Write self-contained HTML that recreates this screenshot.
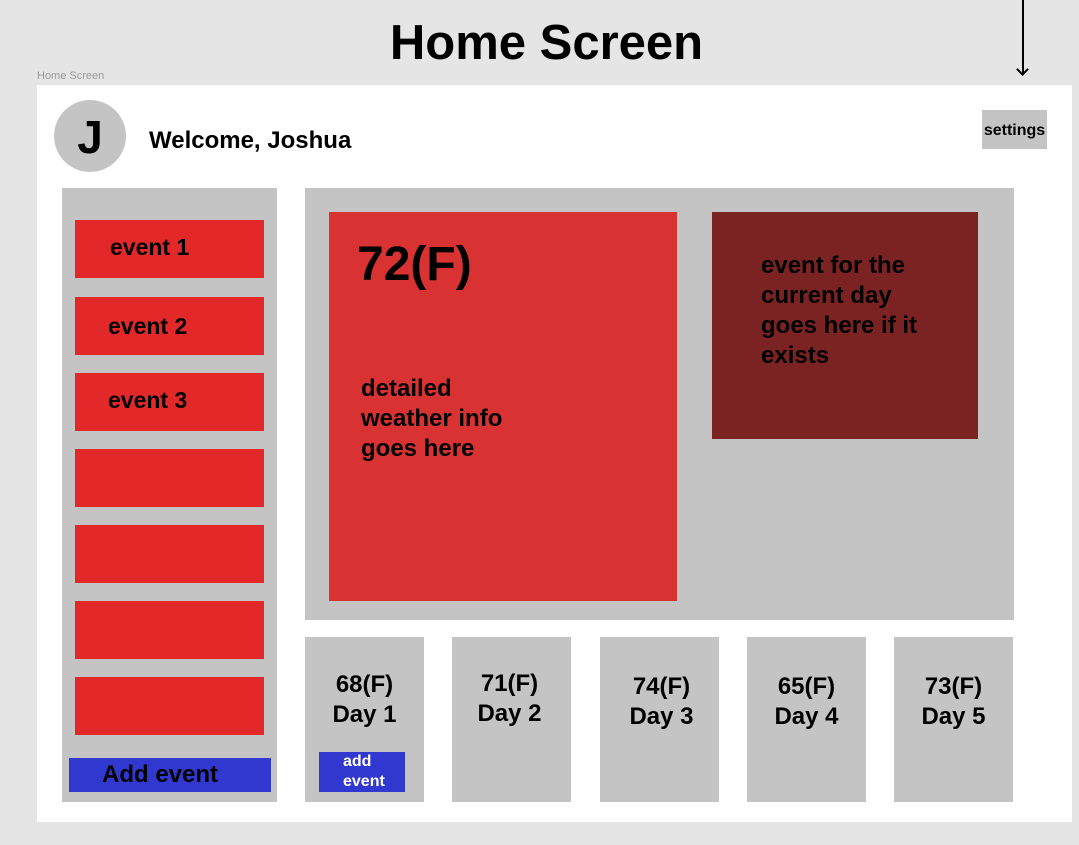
<!DOCTYPE html>
<html><head><style>
body{margin:0;width:1079px;height:845px;background:#e5e5e5;position:relative;overflow:hidden;font-family:"Liberation Sans",sans-serif;font-weight:bold;color:#000}
div,span{position:absolute;box-sizing:border-box}
.g{background:#c4c4c4}
.ev{left:75px;width:189px;height:58px;background:#e22828}
.evt{font-size:23px}
.day{top:637px;width:119px;height:165px;background:#c4c4c4;text-align:center;font-size:24px;line-height:30px}
</style></head><body>
<div style="left:0;width:1079px;top:15px;text-align:center;font-size:49px;padding-left:14px">Home Screen</div>
<div style="left:37px;top:70px;font-size:11px;font-weight:normal;color:#999">Home Screen</div>
<div style="left:1022px;top:0;width:2px;height:75px;background:#000"></div>
<div style="top:65px;width:9px;height:9px;border-right:2px solid #000;border-bottom:2px solid #000;transform:rotate(45deg);left:1018px"></div>
<div style="left:37px;top:85px;width:1035px;height:737px;background:#fff"></div>
<div style="left:54px;top:100px;width:72px;height:72px;border-radius:50%;background:#c4c4c4;text-align:center;font-size:46px;line-height:74px">J</div>
<div style="left:149px;top:127px;font-size:24px">Welcome, Joshua</div>
<div class="g" style="left:982px;top:110px;width:65px;height:39px;font-size:16px;text-align:center;line-height:42px">settings</div>
<div class="g" style="left:62px;top:188px;width:215px;height:614px"></div>
<div class="ev" style="top:220px"><span class="evt" style="left:35px;top:14px">event 1</span></div>
<div class="ev" style="top:297px"><span class="evt" style="left:33px;top:16px">event 2</span></div>
<div class="ev" style="top:373px"><span class="evt" style="left:33px;top:14px">event 3</span></div>
<div class="ev" style="top:449px"></div>
<div class="ev" style="top:525px"></div>
<div class="ev" style="top:601px"></div>
<div class="ev" style="top:677px"></div>
<div style="left:69px;top:758px;width:202px;height:34px;background:#3038d0;font-size:24px;padding-left:33px;line-height:34px">Add event</div>
<div class="g" style="left:305px;top:188px;width:709px;height:432px"></div>
<div style="left:329px;top:212px;width:348px;height:389px;background:#d83232">
<span style="left:28px;top:25px;font-size:48px">72(F)</span>
<span style="left:32px;top:162px;font-size:24px;line-height:30px">detailed<br>weather info<br>goes here</span></div>
<div style="left:712px;top:212px;width:266px;height:227px;background:#7b2222">
<span style="left:49px;top:39px;font-size:24px;line-height:30px">event for the<br>current day<br>goes here if it<br>exists</span></div>
<div class="day" style="left:305px;padding-top:33px">68(F)<br>Day 1
<span style="left:14px;top:115px;width:86px;height:40px;background:#3038d0;color:#fff;font-size:16px;line-height:20px;text-align:left;padding-left:24px">add<br>event</span></div>
<div class="day" style="left:452px;padding-top:32px;padding-right:4px">71(F)<br>Day 2</div>
<div class="day" style="left:600px;padding-top:35px;padding-left:4px">74(F)<br>Day 3</div>
<div class="day" style="left:747px;padding-top:35px">65(F)<br>Day 4</div>
<div class="day" style="left:894px;padding-top:35px">73(F)<br>Day 5</div>
</body></html>
